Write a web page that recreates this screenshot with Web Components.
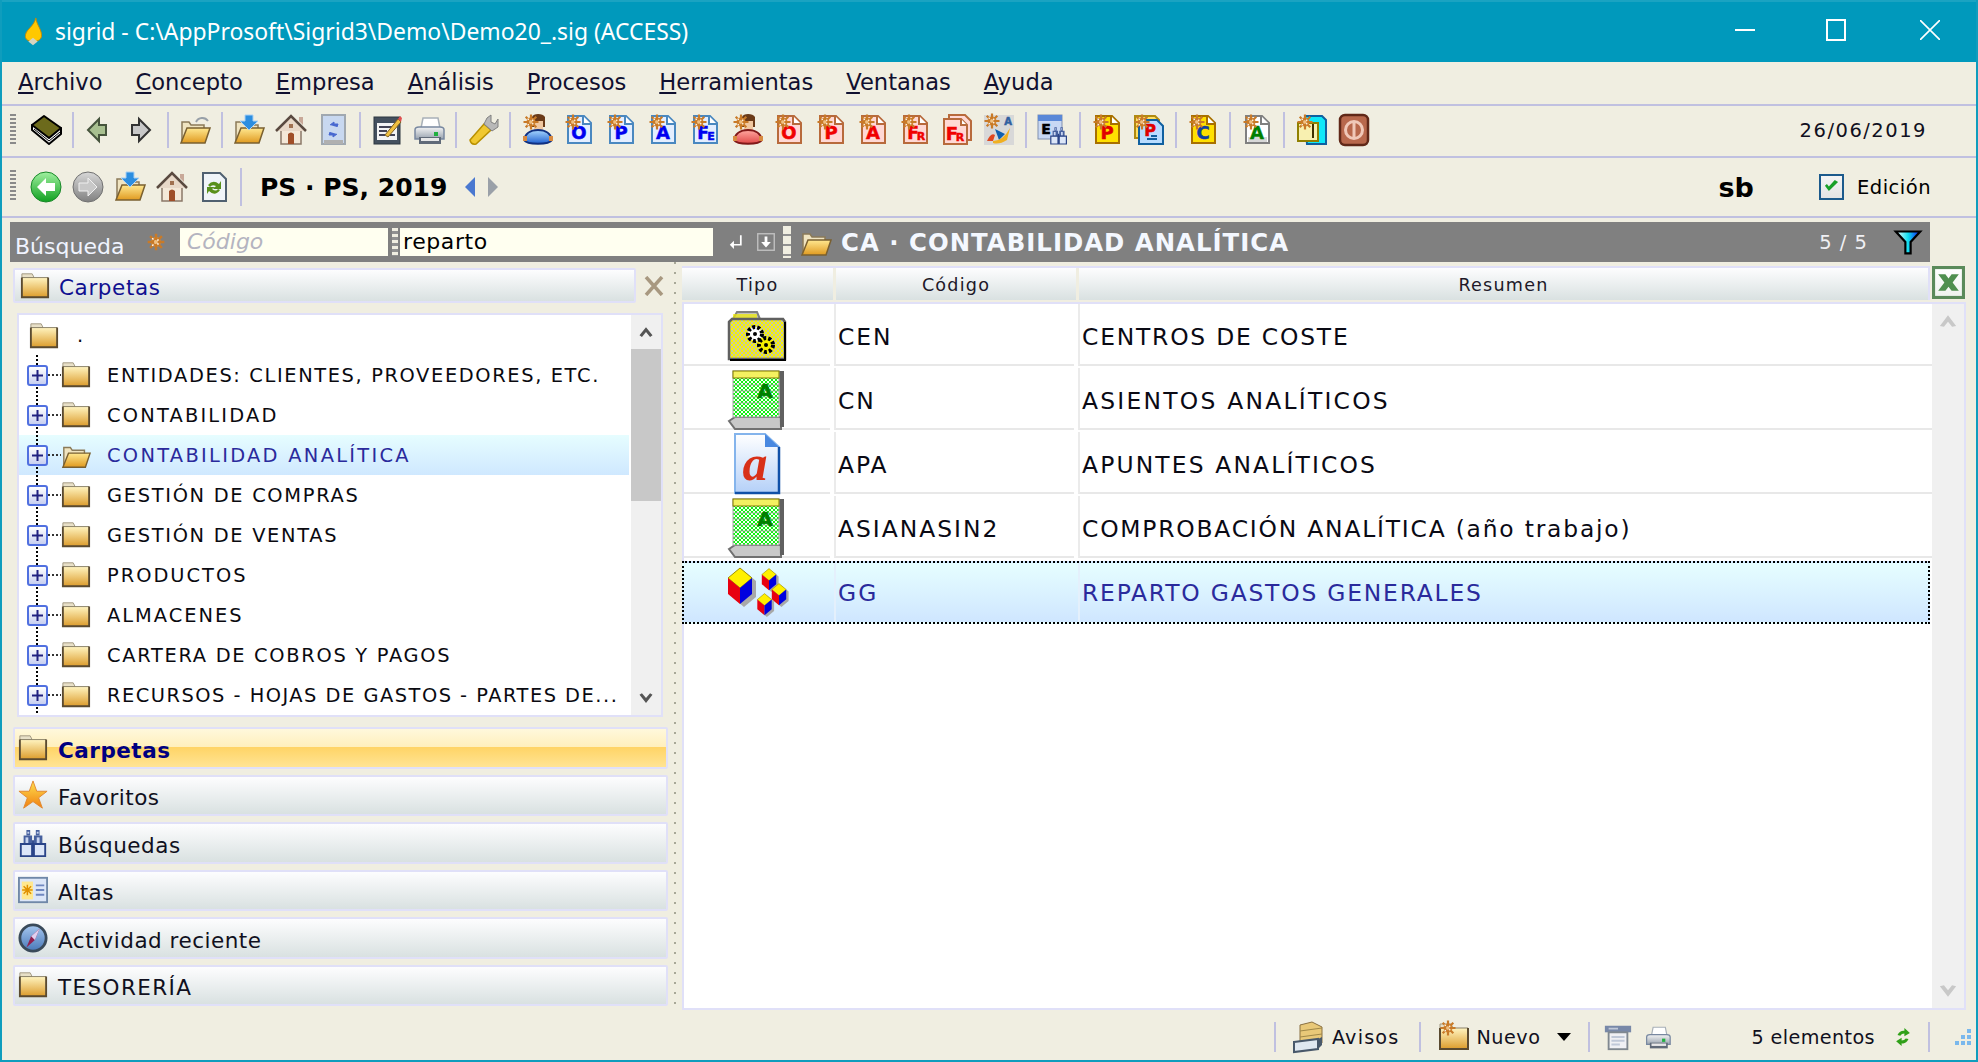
<!DOCTYPE html>
<html lang="es">
<head>
<meta charset="utf-8">
<title>sigrid</title>
<style>
	html, body { margin: 0; padding: 0; background: #f0eee1; overflow: hidden; }
	body { font-family: "DejaVu Sans", sans-serif; color: #000; }
</style>
</head>
<body>
<sg-app>
	<sg-titlebar slot="title">sigrid - C:\AppProsoft\Sigrid3\Demo\Demo20_.sig (ACCESS)</sg-titlebar>
	<sg-menubar>
		<sg-menu-item><u>A</u>rchivo</sg-menu-item>
		<sg-menu-item><u>C</u>oncepto</sg-menu-item>
		<sg-menu-item><u>E</u>mpresa</sg-menu-item>
		<sg-menu-item><u>A</u>nálisis</sg-menu-item>
		<sg-menu-item><u>P</u>rocesos</sg-menu-item>
		<sg-menu-item><u>H</u>erramientas</sg-menu-item>
		<sg-menu-item><u>V</u>entanas</sg-menu-item>
		<sg-menu-item><u>A</u>yuda</sg-menu-item>
	</sg-menubar>
	<sg-toolbar>
		<sg-icon name="book"></sg-icon><sg-sep></sg-sep>
		<sg-icon name="back" style="margin-left:-3px"></sg-icon><sg-icon name="forward" style="margin-left:2px"></sg-icon><sg-sep></sg-sep>
		<sg-icon name="folderOpenArc"></sg-icon><sg-sep></sg-sep>
		<sg-icon name="folderDown"></sg-icon><sg-icon name="home"></sg-icon><sg-icon name="mobile"></sg-icon><sg-sep></sg-sep>
		<sg-icon name="form"></sg-icon><sg-icon name="printer"></sg-icon><sg-sep></sg-sep>
		<sg-icon name="wrench"></sg-icon><sg-sep></sg-sep>
		<sg-icon name="personBlue"></sg-icon><sg-icon name="docBlueO"></sg-icon><sg-icon name="docBlueP"></sg-icon><sg-icon name="docBlueA"></sg-icon><sg-icon name="docBlueFE"></sg-icon>
		<sg-icon name="personRed"></sg-icon><sg-icon name="docRedO"></sg-icon><sg-icon name="docRedP"></sg-icon><sg-icon name="docRedA"></sg-icon><sg-icon name="docRedFR"></sg-icon><sg-icon name="docRedFR2"></sg-icon><sg-icon name="sia"></sg-icon><sg-sep></sg-sep>
		<sg-icon name="binocE"></sg-icon><sg-sep></sg-sep>
		<sg-icon name="docYellowP"></sg-icon><sg-icon name="docBlueStack"></sg-icon><sg-sep></sg-sep>
		<sg-icon name="docYellowC"></sg-icon><sg-sep></sg-sep>
		<sg-icon name="docGreyA"></sg-icon><sg-sep></sg-sep>
		<sg-icon name="cyanDoc"></sg-icon><sg-icon name="power" style="margin-left:1px"></sg-icon>
		<sg-date>26/06/2019</sg-date>
	</sg-toolbar>
	<sg-projectbar company="PS · PS, 2019" user="sb" label="Edición"></sg-projectbar>
	<sg-searchbar term="reparto" placeholder="Código" folder="CA · CONTABILIDAD ANALÍTICA" count="5 / 5"></sg-searchbar>
	<sg-main>
		<sg-folder-panel slot="left">
			<sg-tree-row root label="."></sg-tree-row>
			<sg-tree-row track="1.63" label="ENTIDADES: CLIENTES, PROVEEDORES, ETC."></sg-tree-row>
			<sg-tree-row track="2.2" label="CONTABILIDAD"></sg-tree-row>
			<sg-tree-row track="2.3" selected label="CONTABILIDAD ANALÍTICA"></sg-tree-row>
			<sg-tree-row label="GESTIÓN DE COMPRAS"></sg-tree-row>
			<sg-tree-row label="GESTIÓN DE VENTAS"></sg-tree-row>
			<sg-tree-row track="2" label="PRODUCTOS"></sg-tree-row>
			<sg-tree-row track="2" label="ALMACENES"></sg-tree-row>
			<sg-tree-row label="CARTERA DE COBROS Y PAGOS"></sg-tree-row>
			<sg-tree-row track="1.5" label="RECURSOS - HOJAS DE GASTOS - PARTES DE..."></sg-tree-row>
			<sg-accordion-item slot="accordion" active icon="folder">Carpetas</sg-accordion-item>
			<sg-accordion-item slot="accordion" icon="star">Favoritos</sg-accordion-item>
			<sg-accordion-item slot="accordion" icon="binoc">Búsquedas</sg-accordion-item>
			<sg-accordion-item slot="accordion" icon="altas">Altas</sg-accordion-item>
			<sg-accordion-item slot="accordion" icon="compass">Actividad reciente</sg-accordion-item>
			<sg-accordion-item slot="accordion" icon="folder" style="letter-spacing:1.4px">TESORERÍA</sg-accordion-item>
		</sg-folder-panel>
		<sg-grid slot="right">
			<sg-grid-row icon="gridFolder" code="CEN" text="CENTROS DE COSTE"></sg-grid-row>
			<sg-grid-row icon="gridBook" code="CN" text="ASIENTOS ANALÍTICOS" style="letter-spacing:2.25px"></sg-grid-row>
			<sg-grid-row icon="gridDoc" code="APA" text="APUNTES ANALÍTICOS" style="letter-spacing:2.15px"></sg-grid-row>
			<sg-grid-row icon="gridBook" code="ASIANASIN2" text="COMPROBACIÓN ANALÍTICA (año trabajo)"></sg-grid-row>
			<sg-grid-row selected icon="gridCubes" code="GG" text="REPARTO GASTOS GENERALES"></sg-grid-row>
		</sg-grid>
	</sg-main>
	<sg-statusbar></sg-statusbar>
</sg-app>

<script>
// icon art, all drawn for a 32x32 box unless the entry says otherwise
const sun = (x = 10, y = 8) => `<g transform="translate(${x} ${y})"><circle r="4.5" fill="#d88a30"/><path d="M0-7.5V7.5M-7.5 0H7.5M-5.3-5.3L5.3 5.3M-5.3 5.3L5.3-5.3" stroke="#c87a28" stroke-width="2.2"/><path d="M-3.4-3.4L3.4 3.4M-3.4 3.4L3.4-3.4" stroke="#fff" stroke-width="1.3" stroke-dasharray="1.6 1.6"/><rect x="-1.5" y="-1.5" width="3" height="3" fill="#f0c080"/></g>`
const letter = (ch, color, x = 16, y = 25, size = 18) => `<text x="${x}" y="${y}" text-anchor="middle" font-family="DejaVu Sans" font-weight="700" font-size="${size}" stroke="${color}" stroke-width=".5" fill="${color}">${ch}</text>`
const docShape = (stroke, fill) => `<path d="M5 2H21L28 9V29H5Z" fill="${fill}" stroke="${stroke}" stroke-width="2"/><path d="M20 2V10H28" fill="#fff" stroke="${stroke}" stroke-width="2"/>`
const doc = (stroke, fill, inner) => docShape(stroke, fill) + inner + sun()
const grad = (id, top, bottom) => `<defs><linearGradient id="${id}" x1="0" y1="0" x2="0" y2="1"><stop offset="0" stop-color="${top}"/><stop offset="1" stop-color="${bottom}"/></linearGradient></defs>`
const folderArt = `${grad('f', '#fff4c0', '#dc9c2c')}<path d="M2 3H13L15 7H2Z" fill="#e8e0c8" stroke="#a09880"/><rect x="2" y="7" width="28" height="21" fill="url(#f)"/><path d="M2 7H30" stroke="#8a8068"/><path d="M30 7V28H2V7" fill="none" stroke="#5a4a30" stroke-width="2"/>`
const folderOpenArt = `${grad('o', '#ffe890', '#e09a20')}<path d="M3 8H10L12 11H25V26H3Z" fill="#f0e4c0" stroke="#8a7a58" stroke-width="1.5"/><path d="M8 14H31L26 29H2Z" fill="url(#o)" stroke="#7a6030" stroke-width="1.5"/>`
const person = (c1, c2, c3) => `${grad('p', c1, c2)}<path d="M11 3C12 -1 22 -1 24 3V13H11Z" fill="#6a3a18"/><rect x="13" y="7" width="9" height="9" fill="#f0c8a0"/><path d="M3 26C4 20 9 16 17 16S30 20 31 26C28 31 6 31 3 26Z" fill="url(#p)" stroke="${c3}" stroke-width="2"/><rect x="2" y="22" width="4" height="5" fill="#d88a40"/><rect x="28" y="22" width="4" height="5" fill="#d88a40"/>${sun(10, 8)}`
const printer = `${grad('r', '#f4f4f4', '#9aa4b0')}<path d="M10 4H25L27 14H8Z" fill="#fff" stroke="#a8b0b8" stroke-width="1.5"/><path d="M2 16Q2 13 6 13H27Q31 13 31 16V25H2Z" fill="url(#r)" stroke="#7888a0" stroke-width="1.5"/><rect x="6" y="23" width="22" height="7" fill="#606a78"/><rect x="8" y="24" width="18" height="3" fill="#e8e8e8"/><rect x="21" y="18" width="4" height="4" fill="#20b040"/>`
const binoc = `<g fill="#46609e"><path d="M9 2h4v6h-4zM19 2h4v6h-4z"/><path d="M6 8h9v10H6zM17 8h9v10h-9z"/></g><g fill="#c8d4f0"><rect x="10" y="4" width="2" height="2"/><rect x="20" y="4" width="2" height="2"/><rect x="8" y="10" width="3" height="6"/><rect x="20" y="10" width="3" height="6"/></g><path d="M3 17h12v13H3zM17 17h12v13H17z" fill="#dce6f8" stroke="#2a4488" stroke-width="2"/><path d="M15 13h2v6h-2z" fill="#2a4488"/>`

const ICONS = {
	flame: `<path d="M19 1C20 9 26 14 25 21C24 25 20 26 16 26C11 26 7 24 8 19C9 13 17 10 19 1Z" fill="#ffc800" stroke="#c88a00" stroke-width="1"/><path d="M11 26L16 22L21 26L16 30Z" fill="#d8d4c0"/>`,
	book: `<path d="M2 11V16L19 30L31 20V14Z" fill="#fff" stroke="#000" stroke-width="2" stroke-linejoin="round"/><path d="M4 15L19 27L30 18" fill="none" stroke="#000"/><path d="M2 11L14 2L31 14L19 24Z" fill="#6c6a1c" stroke="#000" stroke-width="2" stroke-linejoin="round"/>`,
	back: `<path d="M7 16L18 5V11H25V21H18V27Z" fill="#a8c090" stroke="#46543c" stroke-width="2"/>`,
	forward: `<path d="M25 16L14 5V11H7V21H14V27Z" fill="#c8c8c8" stroke="#333" stroke-width="2"/>`,
	folderOpenArc: `${folderOpenArt}<path d="M17 8A7 7 0 0 1 29 7" fill="none" stroke="#98a0a8" stroke-width="2"/>`,
	folder: folderArt,
	folderOpen: folderOpenArt,
	folderDown: `${folderOpenArt}<path d="M12 1H20V7H25L16 16L7 7H12Z" fill="#2c8ee0" stroke="#a8d0f4"/>`,
	home: `<path d="M6 14H26V30H6Z" fill="#f4e8d8" stroke="#8a7868" stroke-width="1.5"/><path d="M1 17L16 2L31 17" fill="#e8d8c8" stroke="#5a4a40" stroke-width="2.5"/><path d="M24 3H28V11L24 7Z" fill="#c8a898"/><path d="M14 10h4v4h-4z" fill="#a07050"/><path d="M13 30V20Q16 17 19 20V30Z" fill="#a04e28"/>`,
	mobile: `<rect x="5" y="1" width="23" height="29" fill="#c8d8f0" stroke="#a0a8b0" stroke-width="2"/><rect x="7" y="26" width="19" height="4" fill="#b0b0b0"/><path d="M13 11L17 8V10H21L20 13M20 20L16 23V21H12L13 18" fill="#4868d0" stroke="#4868d0"/>`,
	form: `<rect x="3" y="3" width="26" height="27" fill="#44505e" stroke="#2c3640"/><rect x="6" y="9" width="20" height="17" fill="#f4f4f4"/><path d="M8 13H22M8 17H16M8 21H14M19 21H24" stroke="#445" stroke-width="2"/><path d="M14 21L27 5L30 8L17 23Z" fill="#f0c040" stroke="#806020"/><path d="M27 5L29 2L31 4L30 8Z" fill="#e05050"/>`,
	printer,
	wrench: `<path d="M3 26L17 10L24 16L9 30Q4 31 3 26Z" fill="#f0c830" stroke="#b89000" stroke-width="1.5"/><path d="M17 10L20 4L24 1V8L28 10L31 5V13L25 17Z" fill="#b8b8b8" stroke="#808080"/>`,
	personBlue: person('#a8d8ff', '#2060d0', '#103080'),
	personRed: person('#ffa8a0', '#e04848', '#801818'),
	docBlueO: doc('#4a88c0', '#e4eeff', letter('O', '#0000f0')),
	docBlueP: doc('#4a88c0', '#e4eeff', letter('P', '#0000f0')),
	docBlueA: doc('#4a88c0', '#e4eeff', letter('A', '#0000f0')),
	docBlueFE: doc('#4a88c0', '#e4eeff', letter('F', '#0000f0', 14, 25, 17) + letter('E', '#0000f0', 22, 26, 11)),
	docRedO: doc('#b86a3c', '#ffd8d4', letter('O', '#f00000')),
	docRedP: doc('#b86a3c', '#ffd8d4', letter('P', '#f00000')),
	docRedA: doc('#b86a3c', '#ffd8d4', letter('A', '#f00000')),
	docRedFR: doc('#b86a3c', '#ffd8d4', letter('F', '#f00000', 14, 25, 17) + letter('R', '#f00000', 22, 26, 11)),
	docRedFR2: `<path d="M8 1H24L30 7V26H8Z" fill="#ffd8d4" stroke="#b86a3c" stroke-width="2"/>` + docShape('#b86a3c', '#ffd8d4').replace('M5 2H21L28 9V29H5Z', 'M3 5H20L26 11V30H3Z').replace('M20 2V10H28', 'M20 5V11H26') + letter('F', '#f00000', 11, 26, 18) + letter('R', '#f00000', 19, 27, 11),
	sia: `<rect x="1" y="1" width="30" height="30" fill="#d8d8d8"/>${letter('A', '#3060a0', 25, 11, 10)}<path d="M12 15L22 20L16 26Z" fill="#1060b0"/><path d="M4 27Q8 18 12 21L10 27Z" fill="#e04820"/><path d="M10 27Q20 27 27 14L24 26Q16 31 10 29Z" fill="#f0b020"/>${sun(9, 7)}`,
	binocE: `<rect x="1" y="1" width="24" height="24" fill="#c8d8f4" stroke="#8090b0"/><rect x="1" y="1" width="24" height="6" fill="#5a88d8"/>${letter('E', '#000', 9, 20, 14)}<g transform="translate(12 12) scale(.6)">${binoc}</g>`,
	docYellowP: doc('#a87000', '#ffe000', letter('P', '#e00000')),
	docBlueStack: `<path d="M2 2H22L26 6V24H2Z" fill="#ffe060" stroke="#b08a10" stroke-width="2"/><path d="M6 6H24L30 12V30H6Z" fill="#b8dcff" stroke="#1060a0" stroke-width="2"/>${letter('P', '#e00000', 17, 22, 16)}<path d="M14 25H24M18 22H24" stroke="#1060a0" stroke-width="2"/>${sun(9, 8)}`,
	docYellowC: doc('#a87000', '#ffe000', letter('C', '#1040a0')),
	docGreyA: doc('#808080', '#fff', `<rect x="7" y="23" width="19" height="5" fill="#d8d8d8"/>` + letter('A', '#008000')),
	cyanDoc: `<path d="M10 2H27L31 6V30H12Z" fill="#10e8f8" stroke="#1060a0" stroke-width="2"/><rect x="3" y="9" width="20" height="18" fill="#f8f0b0" stroke="#908000" stroke-width="2"/><path d="M18 10V24" stroke="#403000" stroke-width="2"/>${sun(10, 8)}`,
	power: `<rect x="2" y="1" width="28" height="30" rx="5" fill="#b8684c" stroke="#602818" stroke-width="2.5"/><circle cx="16" cy="16" r="8.5" fill="none" stroke="#f0c8b8" stroke-width="3"/><path d="M16 9V23" stroke="#f0c8b8" stroke-width="3"/>`,
	goBack: `${grad('g', '#a0f0a0', '#10a020')}<circle cx="16" cy="16" r="15" fill="url(#g)" stroke="#188828"/><path d="M7 16L16 7V12H25V20H16V25Z" fill="#fff"/>`,
	goForward: `${grad('g', '#d8d8d8', '#808080')}<circle cx="16" cy="16" r="15" fill="url(#g)" stroke="#707070"/><path d="M25 16L16 7V12H7V20H16V25Z" fill="#c8c8c8" stroke="#f0f0f0"/>`,
	docRefresh: `<path d="M5 2H22L28 8V30H5Z" fill="#f0f4f8" stroke="#506070" stroke-width="2"/><path d="M10 14Q15 8 21 13L23 10V18H15L18 15Q14 13 12 16ZM22 19Q17 26 11 20L9 23V16H17L14 18Q18 21 20 18Z" fill="#58901c"/>`,
	sunOnly: { box: '18 18', art: sun(9, 9) },
	check: `<path d="M6 15L12 23L26 9L21 6L12 16L9 12Z" fill="#18a028"/>`,
	enter: `<path d="M23 6V20H11" fill="none" stroke="#fff" stroke-width="2.5"/><path d="M13 14L7 20L13 26Z" fill="#fff"/>`,
	downBox: `<rect x="4" y="4" width="24" height="24" fill="none" stroke="#c0c0c0" stroke-width="2"/><path d="M14 8H18V16H23L16 24L9 16H14Z" fill="#fff"/>`,
	funnel: `<defs><linearGradient id="k" x1="0" x2="1"><stop offset="0" stop-color="#fff"/><stop offset=".5" stop-color="#10e0f0"/><stop offset="1" stop-color="#1010f0"/></linearGradient></defs><path d="M2 4H30L19 16V29H13V16Z" fill="url(#k)" stroke="#000" stroke-width="2.5"/>`,
	excel: `${grad('x', '#ffffff', '#eef2ee')}<rect x="1.5" y="1.5" width="29" height="29" fill="url(#x)" stroke="#5a8a5a" stroke-width="3"/><path d="M6 8H13L16 12L19 8H26L20 16L26 24H19L16 20L13 24H6L12 16Z" fill="#4f8f4f"/>`,
	star: `${grad('s', '#ffe050', '#f08010')}<path d="M16 1L20 12H31L22 19L26 30L16 23L6 30L10 19L1 12H12Z" fill="url(#s)" stroke="#e08830"/>`,
	binoc,
	altas: `<rect x="1" y="3" width="30" height="26" fill="#dce6f8" stroke="#7088a8" stroke-width="2"/><rect x="4" y="7" width="12" height="19" fill="#ffe890"/><g transform="translate(10 16) scale(.8)"><path d="M0-7V7M-7 0H7M-5-5L5 5M-5 5L5-5" stroke="#e09000" stroke-width="2"/></g><path d="M19 11H28M19 16H28M19 21H28" stroke="#7088c0" stroke-width="2"/>`,
	compass: `${grad('c', '#a8c8f0', '#4878b8')}<circle cx="16" cy="16" r="14" fill="url(#c)" stroke="#3a4a5a" stroke-width="3"/><path d="M23 6L18 18L9 26L14 14Z" fill="#902050"/><path d="M23 6L18 18L14 14Z" fill="#e0d0f0"/>`,
	avisos: `<path d="M8 4L20 1L30 6V22L8 24Z" fill="#e8c878" stroke="#8a7040"/><path d="M8 10L30 7M8 16L30 13" stroke="#a08848"/><path d="M2 21L26 18V28L2 31Z" fill="#e0e8f0" stroke="#48586a" stroke-width="2"/><path d="M26 18L30 16V24L26 28Z" fill="#48586a"/>`,
	nuevo: `${folderArt}${sun(10, 7)}`,
	layout: `<rect x="2" y="4" width="28" height="7" fill="#7888a8"/><rect x="6" y="11" width="20" height="18" fill="#f0f0f4" stroke="#808890" stroke-width="2"/><path d="M9 16H23M9 20H23M9 24H18M6 7H16" stroke="#c0c8d8" stroke-width="2"/>`,
	refresh: `<path d="M8 13Q12 6 18 7V3L26 10L18 15V11Q14 11 12 14ZM24 19Q20 27 14 25V29L6 22L14 17V21Q18 21 20 18Z" fill="#30a018"/>`,
	chevUp: `<path d="M8 20L16 10L24 20L21 22L16 16L11 22Z" fill="#555"/>`,
	chevDown: `<path d="M8 12L16 22L24 12L21 10L16 16L11 10Z" fill="#555"/>`,
	chevUpLight: `<path d="M6 22L16 9L26 22L21 23L16 17L11 23Z" fill="#c8c8c8"/>`,
	chevDownLight: `<path d="M6 10L16 23L26 10L21 9L16 15L11 9Z" fill="#c8c8c8"/>`,
	gridFolder: {
		box: '60 52',
		art: `<defs><pattern id="d" width="4" height="4" patternUnits="userSpaceOnUse"><rect width="4" height="4" fill="#f8f400"/><rect width="2" height="2" fill="#c8c8a0"/><rect x="2" y="2" width="2" height="2" fill="#c8c8a0"/></pattern></defs><path d="M6 9L10 2H30L33 9Z" fill="#c0c0c0" stroke="#808080" stroke-width="2"/><rect x="6" y="4" width="24" height="6" fill="#f4f000" opacity=".7"/><path d="M2 12L5 9H56L58 12V49H2Z" fill="url(#d)" stroke="#606060" stroke-width="2.5"/><path d="M58 12V50H3" fill="none" stroke="#000" stroke-width="2"/><circle cx="28" cy="24" r="7" fill="#fff" stroke="#000" stroke-width="4" stroke-dasharray="3 2"/><circle cx="28" cy="24" r="2" fill="#000"/><circle cx="39" cy="35" r="7" fill="#f4f000" stroke="#000" stroke-width="4" stroke-dasharray="3 2"/><circle cx="39" cy="35" r="2" fill="#000"/>`
	},
	gridBook: {
		box: '60 62',
		art: `<defs><pattern id="d" width="4" height="4" patternUnits="userSpaceOnUse"><rect width="4" height="4" fill="#10f010"/><rect width="2" height="2" fill="#f4fff4"/><rect x="2" y="2" width="2" height="2" fill="#f4fff4"/></pattern></defs><path d="M2 52L8 48H54V60H8Z" fill="#c8c8c8" stroke="#707070" stroke-width="2"/><path d="M52 2H57V58H53Z" fill="#606060"/><rect x="6" y="2" width="46" height="46" fill="url(#d)" stroke="#a8a8a8"/><rect x="6" y="2" width="46" height="7" fill="#f4f060" stroke="#807800"/><path d="M6 16H52M6 22H52M6 28H52M6 34H52M6 40H52" stroke="#a0a0a0" stroke-width="1" opacity=".7"/>${letter('A', '#008000', 39, 29, 20)}`
	},
	gridDoc: {
		box: '60 62',
		art: `${grad('a', '#ffffff', '#b4d0f8')}<path d="M8 1H38L52 14V60H8Z" fill="url(#a)" stroke="#84b4ec" stroke-width="2"/><path d="M52 14V60H8" fill="none" stroke="#1050a8" stroke-width="2.5"/><path d="M38 1L52 14H38Z" fill="#4888e0"/><text x="29" y="47" text-anchor="middle" font-family="Liberation Serif" font-style="italic" font-weight="700" font-size="50" fill="#d83018">a</text>`
	},
	gridCubes: {
		box: '60 54',
		art: `${[[13, 16, 1], [42, 11, .6], [52, 26, .6], [37.5, 36, .6]].map(([x, y, s]) => `<g transform="translate(${x} ${y}) scale(${s})"><path d="M0-14L12-4V12L0 22L-12 12V-4Z" fill="#a8a8a8" transform="translate(4 3)"/><path d="M0-14L12-4L0 6L-12-4Z" fill="#fff000" stroke="#a09000" stroke-width="1"/><path d="M-12-4L0 6V22L-12 12Z" fill="#e80010"/><path d="M12-4L0 6V22L12 12Z" fill="#0000e0"/></g>`).join('')}`
	},
	grip: {
		box: '20 20',
		art: `<g fill="#7ab8ec"><rect x="15" y="2" width="4" height="4"/><rect x="9" y="8" width="4" height="4"/><rect x="15" y="8" width="4" height="4"/><rect x="3" y="14" width="4" height="4"/><rect x="9" y="14" width="4" height="4"/><rect x="15" y="14" width="4" height="4"/></g>`
	}
}

// base class: shadow root from a css/html pair, re-rendered on connect
class SgElement extends HTMLElement {
	constructor() {
		super()
		this.attachShadow({ mode: 'open' })
	}
	connectedCallback() {
		this.shadowRoot.innerHTML = `<style>${this.css()}</style>${this.html()}`
	}
	css() { return ':host{display:block}' }
	html() { return '<slot></slot>' }
	attr(name, fallback = '') {
		const v = this.getAttribute(name)
		return v === null ? fallback : v
	}
}

class SgIcon extends SgElement {
	css() {
		return `:host{display:inline-flex;flex:none;line-height:0}svg{display:block;overflow:visible}`
	}
	html() {
		const entry = ICONS[this.attr('name')] || ''
		const art = typeof entry === 'string' ? entry : entry.art
		const [w, h] = (typeof entry === 'string' ? '32 32' : entry.box).split(' ')
		const width = this.attr('size', w)
		const height = this.attr('size', h)
		return `<svg width="${width}" height="${height}" viewBox="0 0 ${w} ${h}" aria-hidden="true">${art}</svg>`
	}
}

class SgApp extends SgElement {
	css() {
		return `:host{display:flex;flex-direction:column;box-sizing:border-box;width:100vw;height:100vh;background:#f0eee1;border:solid #0f9dbd;border-width:0 2px 2px 2px;overflow:hidden}
		::slotted(sg-titlebar){margin:0 -2px}`
	}
	html() { return '<slot name="title"></slot><slot></slot>' }
}

class SgTitlebar extends SgElement {
	css() {
		return `:host{display:flex;align-items:center;height:62px;flex:none;background:#0099bc;border-top:2px solid #1aa3c2;box-sizing:border-box;color:#fff;font:22.9px "Noto Sans","Open Sans",sans-serif;padding-left:18px}
		.t{margin-left:7px;margin-top:-2px;white-space:nowrap}
		.btns{margin-left:auto;display:flex;align-items:center;height:100%;margin-right:1px}
		.b{width:94px;display:flex;justify-content:center;align-items:center;margin-top:-4px}
		.b.min{width:88px}
		.b svg{display:block}`
	}
	html() {
		return `<sg-icon name="flame" size="30"></sg-icon><span class="t"><slot></slot></span>
		<div class="btns">
			<div class="b min"><svg width="20" height="20"><path d="M0 10H20" stroke="#fff" stroke-width="2"/></svg></div>
			<div class="b"><svg width="20" height="22"><rect x="1" y="1" width="18" height="20" fill="none" stroke="#fff" stroke-width="2"/></svg></div>
			<div class="b"><svg width="20" height="20"><path d="M0 0L20 20M20 0L0 20" stroke="#fff" stroke-width="1.6"/></svg></div>
		</div>`
	}
}

class SgMenubar extends SgElement {
	css() {
		return `:host{display:flex;align-items:center;gap:33px;height:44px;flex:none;box-sizing:border-box;padding:0 0 2px 16px;border-bottom:2px solid #c0c0e0;font:22.6px "DejaVu Sans",sans-serif}`
	}
}

class SgMenuItem extends SgElement {
	css() { return `:host{display:inline-block;color:#101030}` }
}

class SgToolbar extends SgElement {
	css() {
		return `:host{display:flex;align-items:center;gap:10px;height:52px;flex:none;box-sizing:border-box;border-bottom:2px solid #c0c0e0;position:relative;padding:0 0 2px 28px}
		.grip{position:absolute;left:8px;top:8px;width:6px;height:30px;background:repeating-linear-gradient(to bottom,#8a8a8a 0 2px,#f0eee1 2px 4px)}`
	}
	html() { return '<div class="grip"></div><slot></slot>' }
}

class SgSep extends SgElement {
	css() { return `:host{display:block;flex:none;width:2px;height:36px;background:#c0c0e0}` }
}

class SgDate extends SgElement {
	css() { return `:host{display:block;margin-left:auto;margin-right:49px;font:19.5px "DejaVu Sans",sans-serif;letter-spacing:1.5px;color:#101020}` }
}

class SgProjectbar extends SgElement {
	css() {
		return `:host{display:flex;align-items:center;height:60px;flex:none;box-sizing:border-box;border-bottom:2px solid #c0c0e0;position:relative;padding-left:28px;gap:10px}
		.grip{position:absolute;left:8px;top:12px;width:6px;height:30px;background:repeating-linear-gradient(to bottom,#8a8a8a 0 2px,#f0eee1 2px 4px)}
		.sep{width:2px;height:38px;background:#c0c0e0}
		.name{font:700 25px "DejaVu Sans",sans-serif;margin-left:8px;white-space:nowrap}
		.nav{display:flex;gap:13px;margin-left:8px}
		.user{margin-left:auto;font:700 27px "DejaVu Sans",sans-serif}
		.box{box-sizing:border-box;width:25px;height:26px;border:2px solid #1c5a8c;background:linear-gradient(#f4f4f4,#e4e4e4);margin:0 3px 0 55px;line-height:0}
		.lbl{font:19.5px "DejaVu Sans",sans-serif;letter-spacing:.5px;margin-right:45px}`
	}
	html() {
		return `<div class="grip"></div>
		<sg-icon name="goBack"></sg-icon><sg-icon name="goForward"></sg-icon><sg-icon name="folderDown"></sg-icon><sg-icon name="home"></sg-icon><sg-icon name="docRefresh"></sg-icon>
		<div class="sep"></div>
		<span class="name">${this.attr('company')}</span>
		<div class="nav">
			<svg width="10" height="20"><path d="M10 0V20L0 10Z" fill="#4a78d0"/></svg>
			<svg width="10" height="20"><path d="M0 0V20L10 10Z" fill="#9aa0a8"/></svg>
		</div>
		<span class="user">${this.attr('user')}</span>
		<div class="box"><sg-icon name="check" size="21"></sg-icon></div>
		<span class="lbl">${this.attr('label')}</span>`
	}
}

class SgSearchbar extends SgElement {
	css() {
		return `:host{display:flex;align-items:center;height:40px;flex:none;margin:4px 46px 0 8px;background:#808080;color:#fff;position:relative}
		.title{font:22px "DejaVu Sans",sans-serif;color:#f0f4ff;margin:8px 0 0 5px;width:128px;white-space:nowrap}
		.field{box-sizing:border-box;height:28px;background:#fffff0;font:22px "DejaVu Sans",sans-serif;color:#000;line-height:28px;padding-left:5px;white-space:nowrap}
		.code{width:208px;color:#b4b4c0;font-style:italic;margin-left:14px;padding-left:7px}
		.term{width:313px;margin-left:2px;padding-left:3px;letter-spacing:.6px}
		.split{width:6px;height:28px;margin-left:4px;background:repeating-linear-gradient(to bottom,#f0eee1 0 3px,#909090 3px 6px)}
		.split2{width:8px;height:32px;margin-left:6px;background:repeating-linear-gradient(to bottom,#f0eee1 0 8px,#909090 8px 10px)}
		.folder{font:700 24.4px "DejaVu Sans",sans-serif;letter-spacing:1px;color:#f4f8ff;margin-left:9px;white-space:nowrap}
		.count{margin-left:auto;font:19.5px "DejaVu Sans",sans-serif;color:#f0f0f4;letter-spacing:1px;margin-right:26px}`
	}
	html() {
		return `<span class="title">Búsqueda</span>
		<sg-icon name="sunOnly" size="20" style="margin-left:3px"></sg-icon>
		<div class="field code">${this.attr('placeholder')}</div>
		<div class="split"></div>
		<div class="field term">${this.attr('term')}</div>
		<sg-icon name="enter" size="22" style="margin-left:12px"></sg-icon>
		<sg-icon name="downBox" size="22" style="margin-left:8px"></sg-icon>
		<div class="split2"></div>
		<sg-icon name="folderOpen" size="32" style="margin-left:9px"></sg-icon>
		<span class="folder">${this.attr('folder')}</span>
		<span class="count">${this.attr('count')}</span>
		<sg-icon name="funnel" size="28" style="margin-right:8px"></sg-icon>`
	}
}

class SgMain extends SgElement {
	css() {
		return `:host{display:flex;flex:1;min-height:0}
		.split{flex:none;width:14px;background:repeating-linear-gradient(to bottom,#a8a898 0 2px,transparent 2px 10px) center/2px 100% no-repeat}`
	}
	html() { return '<slot name="left"></slot><div class="split"></div><slot name="right"></slot>' }
}

class SgFolderPanel extends SgElement {
	css() {
		return `:host{display:flex;flex-direction:column;flex:none;box-sizing:border-box;width:666px;padding:6px 0 0 11px}
		.head{display:flex;align-items:center;height:35px}
		.title{box-sizing:border-box;flex:none;width:623px;height:35px;display:flex;align-items:center;gap:9px;padding-left:5px;border:2px solid #e0e0f8;border-radius:2px;background:linear-gradient(#fdfdfe,#d9e1e1);font:21.5px "DejaVu Sans",sans-serif;letter-spacing:.6px;color:#101090}
		.title span{padding-top:4px}
		.x{margin-left:8px;font-size:0}
		.tree{box-sizing:border-box;display:flex;margin:10px 5px 10px 4px;height:404px;border:2px solid #e0e0f8;background:#fff}
		.rows{flex:1;min-width:0;overflow:hidden}
		.bar{flex:none;width:30px;margin-left:2px;background:#f0f0f0;display:flex;flex-direction:column;align-items:center}
		.thumb{width:100%;height:152px;background:#c8c8c8;margin:0 0 auto}
		.cap{height:34px;display:flex;align-items:center;justify-content:center}`
	}
	html() {
		return `<div class="head">
			<div class="title"><sg-icon name="folder" size="30"></sg-icon><span>Carpetas</span></div>
			<svg class="x" width="20" height="20"><path d="M2 1L18 19M18 1L2 19" stroke="#a89880" stroke-width="3.5"/></svg>
		</div>
		<div class="tree">
			<div class="rows"><slot></slot></div>
			<div class="bar"><div class="cap"><sg-icon name="chevUp" size="26"></sg-icon></div><div class="thumb"></div><div class="cap"><sg-icon name="chevDown" size="26"></sg-icon></div></div>
		</div>
		<slot name="accordion"></slot>`
	}
}

class SgTreeRow extends SgElement {
	css() {
		const root = this.hasAttribute('root')
		const sel = this.hasAttribute('selected')
		return `:host{display:flex;align-items:center;box-sizing:border-box;height:40px;padding-left:${root ? 10 : 7}px;white-space:nowrap;${root ? 'padding-top:1px;' : ''}${sel ? 'background:linear-gradient(#e6fdff,#cfe8ff);' : ''}}
		.exp{flex:none;width:22px;height:100%;display:flex;align-items:center;justify-content:center;background:repeating-linear-gradient(to bottom,#000 0 2px,transparent 2px 4px) center/2px 100% no-repeat}
		.plus{box-sizing:border-box;width:21px;height:21px;border:2px solid #5070e0;border-radius:3px;background:linear-gradient(#fff,#c8d0f0);display:flex;align-items:center;justify-content:center}
		.dots{flex:none;width:13px;height:2px;background:repeating-linear-gradient(to right,#333 0 2px,transparent 2px 4px)}
		.txt{font:19.4px "DejaVu Sans",sans-serif;letter-spacing:${this.attr('track', '1.7')}px;color:${sel ? '#2a2a9c' : '#0a0a10'};margin-left:${root ? 18 : 16}px}`
	}
	html() {
		const root = this.hasAttribute('root')
		const sel = this.hasAttribute('selected')
		const exp = root ? '' : `<div class="exp"><div class="plus"><svg width="11" height="11"><path d="M5.5 0V11M0 5.5H11" stroke="#202080" stroke-width="2"/></svg></div></div><div class="dots"></div>`
		return `${exp}<sg-icon name="${sel ? 'folderOpen' : 'folder'}" size="30"></sg-icon><span class="txt">${this.attr('label')}</span>`
	}
}

class SgAccordionItem extends SgElement {
	css() {
		const active = this.hasAttribute('active')
		const bg = active
			? 'linear-gradient(#fff8dc 0,#ffefbc 48%,#ffd466 48%,#ffe494 100%)'
			: 'linear-gradient(#fdfdfe,#d9e1e1)'
		return `:host{display:flex;align-items:center;gap:10px;box-sizing:border-box;height:42px;margin-bottom:6px;width:655px;padding-left:3px;border:2px solid #e0e0f8;border-radius:2px;background:${bg};font:${active ? '700 21.5px' : '21.5px'} "DejaVu Sans",sans-serif;letter-spacing:.5px;color:${active ? '#000080' : '#101020'}}
		span{padding-top:5px}`
	}
	html() {
		return `<sg-icon name="${this.attr('icon')}" size="30"></sg-icon><span><slot></slot></span>`
	}
}

class SgGrid extends SgElement {
	css() {
		return `:host{display:flex;flex-direction:column;flex:1;min-width:0;margin:4px 10px 2px 0}
		.head{display:flex;height:36px;flex:none;font:17.6px "DejaVu Sans",sans-serif;letter-spacing:1.2px;color:#201828}
		.cols{box-sizing:border-box;flex:none;width:1248px;display:flex;gap:3px;border:solid #e0e0f8;border-width:2px 2px 0 0;height:34px}
		.c{background:linear-gradient(#fdfdfe,#d9e1e1);display:flex;align-items:center;justify-content:center;padding-top:2px}
		.c1{width:151px}.c2{width:240px}.c3{flex:1}
		.xl{margin-left:2px;line-height:0}
		.body{box-sizing:border-box;flex:1;min-height:0;display:flex;border:2px solid #e0e0f8;background:#fff}
		.rows{flex:none;width:1248px}
		.bar{flex:1;background:#f0f0f0;display:flex;flex-direction:column;justify-content:space-between;align-items:center;padding:4px 0}`
	}
	html() {
		return `<div class="head">
			<div class="cols"><div class="c c1">Tipo</div><div class="c c2">Código</div><div class="c c3">Resumen</div></div>
			<div class="xl"><sg-icon name="excel" size="33"></sg-icon></div>
		</div>
		<div class="body">
			<div class="rows"><slot></slot></div>
			<div class="bar"><sg-icon name="chevUpLight" size="26"></sg-icon><sg-icon name="chevDownLight" size="26"></sg-icon></div>
		</div>`
	}
}

class SgGridRow extends SgElement {
	css() {
		const sel = this.hasAttribute('selected')
		const host = sel
			? 'height:63px;margin-top:1px;margin-left:-2px;width:1248px;border:2px dotted #000;background:linear-gradient(#e6feff,#cfe6ff);color:#2a2a9c;'
			: 'height:64px;color:#0a0a14;'
		return `:host{display:grid;grid-template-columns:146px 240px 1fr;column-gap:4px;box-sizing:border-box;${host}font:23.4px "DejaVu Sans",sans-serif;letter-spacing:1.8px}
		.cell{display:flex;align-items:center;box-sizing:border-box;${sel ? '' : 'height:62px;padding-top:5px;border-bottom:2px solid #e8e8e8;'}white-space:nowrap}
		.ic{justify-content:center;${sel ? '' : 'padding-top:3px;'}}
		.t{border-left:2px solid ${sel ? '#e4f0fc' : '#ebebeb'};padding-left:2px}
		.code{letter-spacing:2px}`
	}
	html() {
		return `<div class="cell ic"><sg-icon name="${this.attr('icon')}"></sg-icon></div>
		<div class="cell t code">${this.attr('code')}</div>
		<div class="cell t">${this.attr('text')}</div>`
	}
}

class SgStatusbar extends SgElement {
	css() {
		return `:host{display:flex;align-items:center;box-sizing:border-box;height:48px;flex:none;font:19.2px "DejaVu Sans",sans-serif;color:#101020;padding:2px 6px 0 0}
		.s{flex:none;width:2px;height:30px;background:#c0c0e0}
		.push{margin-left:auto}`
	}
	html() {
		return `<div class="s push"></div>
		<sg-icon name="avisos" style="margin-left:16px"></sg-icon><span style="margin-left:8px;letter-spacing:1.2px">Avisos</span>
		<div class="s" style="margin-left:19px"></div>
		<sg-icon name="nuevo" style="margin-left:17px"></sg-icon><span style="margin-left:7px;letter-spacing:.5px">Nuevo</span>
		<svg width="14" height="8" style="margin-left:17px"><path d="M0 0H14L7 8Z" fill="#000"/></svg>
		<div class="s" style="margin-left:17px"></div>
		<sg-icon name="layout" size="30" style="margin-left:13px"></sg-icon><sg-icon name="printer" size="26" style="margin-left:12px"></sg-icon>
		<span style="margin-left:80px;letter-spacing:.4px">5 elementos</span>
		<sg-icon name="refresh" size="22" style="margin-left:17px"></sg-icon>
		<div class="s" style="margin-left:14px"></div>
		<sg-icon name="grip" style="margin-left:22px;margin-right:-2px"></sg-icon>`
	}
}

const defs = {
	'sg-icon': SgIcon, 'sg-app': SgApp, 'sg-titlebar': SgTitlebar, 'sg-menubar': SgMenubar,
	'sg-menu-item': SgMenuItem, 'sg-toolbar': SgToolbar, 'sg-sep': SgSep, 'sg-date': SgDate,
	'sg-projectbar': SgProjectbar, 'sg-searchbar': SgSearchbar, 'sg-main': SgMain,
	'sg-folder-panel': SgFolderPanel, 'sg-tree-row': SgTreeRow, 'sg-accordion-item': SgAccordionItem,
	'sg-grid': SgGrid, 'sg-grid-row': SgGridRow, 'sg-statusbar': SgStatusbar
}
for (const [tag, cls] of Object.entries(defs)) customElements.define(tag, cls)
</script>
</body>
</html>
